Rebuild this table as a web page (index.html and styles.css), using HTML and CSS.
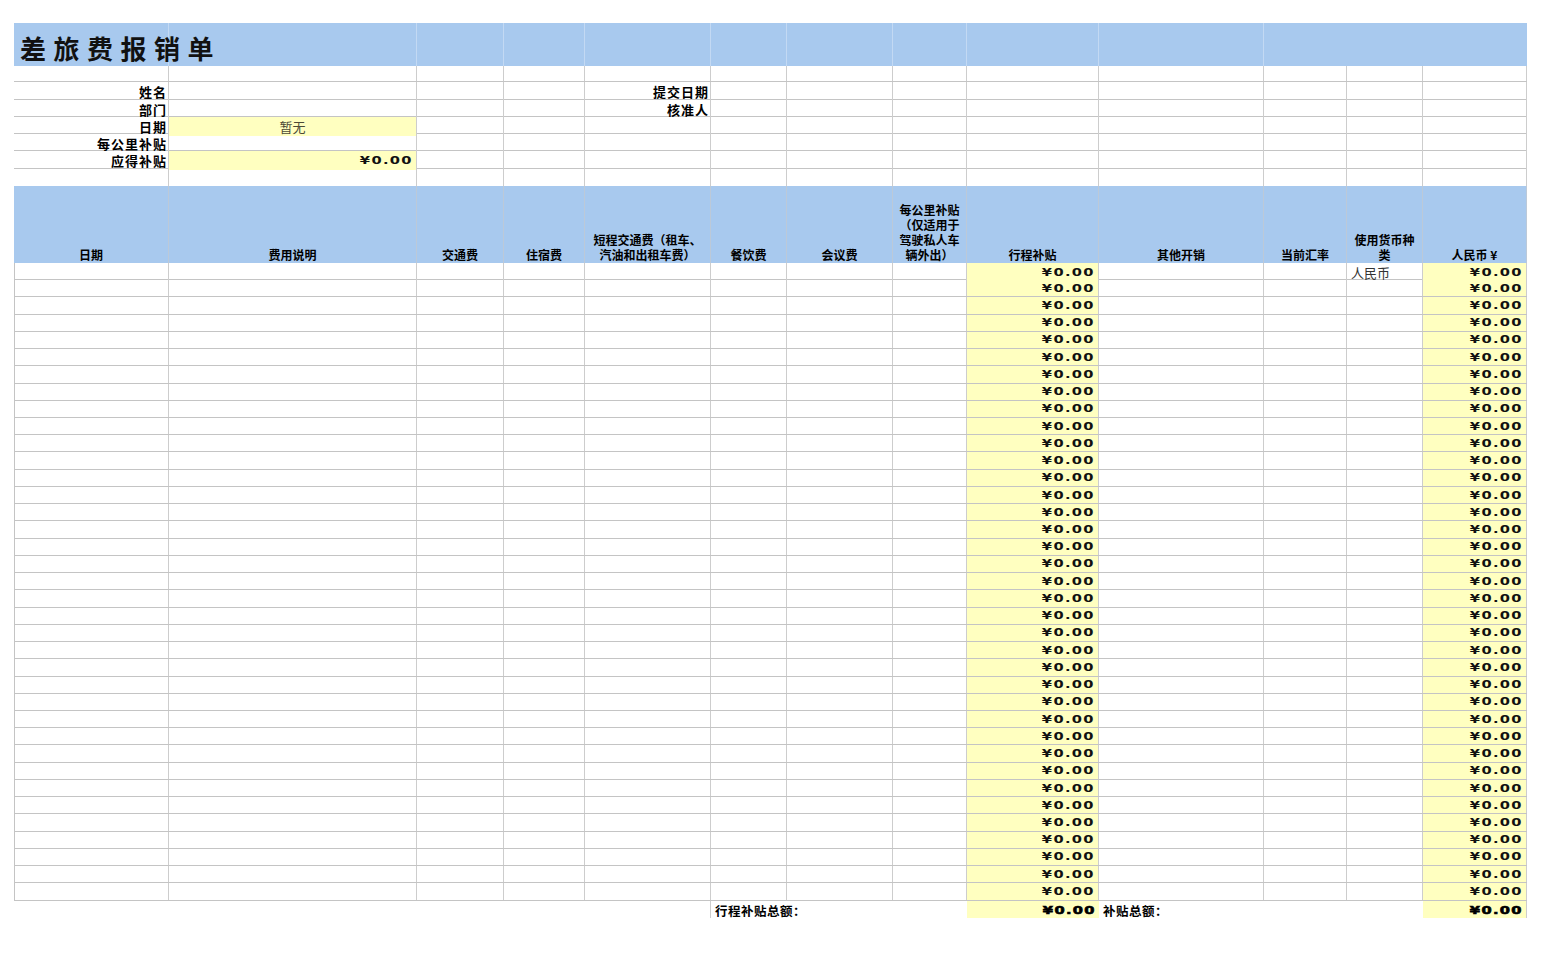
FILE: index.html
```html
<!DOCTYPE html>
<html lang="zh-CN">
<head>
<meta charset="utf-8">
<title>差旅费报销单</title>
<link rel="stylesheet" href="styles.css">
</head>
<body>
<div class="sheet">
  <div class="row title-row">
    <div class="c title">差旅费报销单</div>
    <div class="c"></div><div class="c"></div><div class="c"></div><div class="c"></div><div class="c"></div><div class="c"></div><div class="c"></div><div class="c"></div><div class="c"></div>
    <div class="c span3 last"></div>
  </div>

  <div class="row info first"><div class="c"></div><div class="c"></div><div class="c"></div><div class="c"></div><div class="c"></div><div class="c"></div><div class="c"></div><div class="c"></div><div class="c"></div><div class="c"></div><div class="c"></div><div class="c"></div><div class="c"></div></div>
  <div class="row info"><div class="c lbl">姓名</div><div class="c"></div><div class="c"></div><div class="c"></div><div class="c lbl">提交日期</div><div class="c"></div><div class="c"></div><div class="c"></div><div class="c"></div><div class="c"></div><div class="c"></div><div class="c"></div><div class="c"></div></div>
  <div class="row info"><div class="c lbl">部门</div><div class="c"></div><div class="c"></div><div class="c"></div><div class="c lbl">核准人</div><div class="c"></div><div class="c"></div><div class="c"></div><div class="c"></div><div class="c"></div><div class="c"></div><div class="c"></div><div class="c"></div></div>
  <div class="row info"><div class="c lbl">日期</div><div class="c y val">暂无</div><div class="c"></div><div class="c"></div><div class="c"></div><div class="c"></div><div class="c"></div><div class="c"></div><div class="c"></div><div class="c"></div><div class="c"></div><div class="c"></div><div class="c"></div></div>
  <div class="row info"><div class="c lbl">每公里补贴</div><div class="c"></div><div class="c"></div><div class="c"></div><div class="c"></div><div class="c"></div><div class="c"></div><div class="c"></div><div class="c"></div><div class="c"></div><div class="c"></div><div class="c"></div><div class="c"></div></div>
  <div class="row info"><div class="c lbl">应得补贴</div><div class="c y money"><span>¥0.00</span></div><div class="c"></div><div class="c"></div><div class="c"></div><div class="c"></div><div class="c"></div><div class="c"></div><div class="c"></div><div class="c"></div><div class="c"></div><div class="c"></div><div class="c"></div></div>
  <div class="row info last"><div class="c"></div><div class="c"></div><div class="c"></div><div class="c"></div><div class="c"></div><div class="c"></div><div class="c"></div><div class="c"></div><div class="c"></div><div class="c"></div><div class="c"></div><div class="c"></div><div class="c"></div></div>

  <div class="row head">
    <div class="c">日期</div>
    <div class="c">费用说明</div>
    <div class="c">交通费</div>
    <div class="c">住宿费</div>
    <div class="c">短程交通费（租车、<br>汽油和出租车费）</div>
    <div class="c">餐饮费</div>
    <div class="c">会议费</div>
    <div class="c">每公里补贴<br>（仅适用于<br>驾驶私人车<br>辆外出）</div>
    <div class="c">行程补贴</div>
    <div class="c">其他开销</div>
    <div class="c">当前汇率</div>
    <div class="c">使用货币种<br>类</div>
    <div class="c">人民币 ¥</div>
  </div>

  <div class="row data"><div class="c"></div><div class="c"></div><div class="c"></div><div class="c"></div><div class="c"></div><div class="c"></div><div class="c"></div><div class="c"></div><div class="c y money"><span>¥0.00</span></div><div class="c"></div><div class="c"></div><div class="c cur">人民币</div><div class="c y money"><span>¥0.00</span></div></div>
  <div class="row data"><div class="c"></div><div class="c"></div><div class="c"></div><div class="c"></div><div class="c"></div><div class="c"></div><div class="c"></div><div class="c"></div><div class="c y money"><span>¥0.00</span></div><div class="c"></div><div class="c"></div><div class="c"></div><div class="c y money"><span>¥0.00</span></div></div>
  <div class="row data"><div class="c"></div><div class="c"></div><div class="c"></div><div class="c"></div><div class="c"></div><div class="c"></div><div class="c"></div><div class="c"></div><div class="c y money"><span>¥0.00</span></div><div class="c"></div><div class="c"></div><div class="c"></div><div class="c y money"><span>¥0.00</span></div></div>
  <div class="row data"><div class="c"></div><div class="c"></div><div class="c"></div><div class="c"></div><div class="c"></div><div class="c"></div><div class="c"></div><div class="c"></div><div class="c y money"><span>¥0.00</span></div><div class="c"></div><div class="c"></div><div class="c"></div><div class="c y money"><span>¥0.00</span></div></div>
  <div class="row data"><div class="c"></div><div class="c"></div><div class="c"></div><div class="c"></div><div class="c"></div><div class="c"></div><div class="c"></div><div class="c"></div><div class="c y money"><span>¥0.00</span></div><div class="c"></div><div class="c"></div><div class="c"></div><div class="c y money"><span>¥0.00</span></div></div>
  <div class="row data"><div class="c"></div><div class="c"></div><div class="c"></div><div class="c"></div><div class="c"></div><div class="c"></div><div class="c"></div><div class="c"></div><div class="c y money"><span>¥0.00</span></div><div class="c"></div><div class="c"></div><div class="c"></div><div class="c y money"><span>¥0.00</span></div></div>
  <div class="row data"><div class="c"></div><div class="c"></div><div class="c"></div><div class="c"></div><div class="c"></div><div class="c"></div><div class="c"></div><div class="c"></div><div class="c y money"><span>¥0.00</span></div><div class="c"></div><div class="c"></div><div class="c"></div><div class="c y money"><span>¥0.00</span></div></div>
  <div class="row data"><div class="c"></div><div class="c"></div><div class="c"></div><div class="c"></div><div class="c"></div><div class="c"></div><div class="c"></div><div class="c"></div><div class="c y money"><span>¥0.00</span></div><div class="c"></div><div class="c"></div><div class="c"></div><div class="c y money"><span>¥0.00</span></div></div>
  <div class="row data"><div class="c"></div><div class="c"></div><div class="c"></div><div class="c"></div><div class="c"></div><div class="c"></div><div class="c"></div><div class="c"></div><div class="c y money"><span>¥0.00</span></div><div class="c"></div><div class="c"></div><div class="c"></div><div class="c y money"><span>¥0.00</span></div></div>
  <div class="row data"><div class="c"></div><div class="c"></div><div class="c"></div><div class="c"></div><div class="c"></div><div class="c"></div><div class="c"></div><div class="c"></div><div class="c y money"><span>¥0.00</span></div><div class="c"></div><div class="c"></div><div class="c"></div><div class="c y money"><span>¥0.00</span></div></div>
  <div class="row data"><div class="c"></div><div class="c"></div><div class="c"></div><div class="c"></div><div class="c"></div><div class="c"></div><div class="c"></div><div class="c"></div><div class="c y money"><span>¥0.00</span></div><div class="c"></div><div class="c"></div><div class="c"></div><div class="c y money"><span>¥0.00</span></div></div>
  <div class="row data"><div class="c"></div><div class="c"></div><div class="c"></div><div class="c"></div><div class="c"></div><div class="c"></div><div class="c"></div><div class="c"></div><div class="c y money"><span>¥0.00</span></div><div class="c"></div><div class="c"></div><div class="c"></div><div class="c y money"><span>¥0.00</span></div></div>
  <div class="row data"><div class="c"></div><div class="c"></div><div class="c"></div><div class="c"></div><div class="c"></div><div class="c"></div><div class="c"></div><div class="c"></div><div class="c y money"><span>¥0.00</span></div><div class="c"></div><div class="c"></div><div class="c"></div><div class="c y money"><span>¥0.00</span></div></div>
  <div class="row data"><div class="c"></div><div class="c"></div><div class="c"></div><div class="c"></div><div class="c"></div><div class="c"></div><div class="c"></div><div class="c"></div><div class="c y money"><span>¥0.00</span></div><div class="c"></div><div class="c"></div><div class="c"></div><div class="c y money"><span>¥0.00</span></div></div>
  <div class="row data"><div class="c"></div><div class="c"></div><div class="c"></div><div class="c"></div><div class="c"></div><div class="c"></div><div class="c"></div><div class="c"></div><div class="c y money"><span>¥0.00</span></div><div class="c"></div><div class="c"></div><div class="c"></div><div class="c y money"><span>¥0.00</span></div></div>
  <div class="row data"><div class="c"></div><div class="c"></div><div class="c"></div><div class="c"></div><div class="c"></div><div class="c"></div><div class="c"></div><div class="c"></div><div class="c y money"><span>¥0.00</span></div><div class="c"></div><div class="c"></div><div class="c"></div><div class="c y money"><span>¥0.00</span></div></div>
  <div class="row data"><div class="c"></div><div class="c"></div><div class="c"></div><div class="c"></div><div class="c"></div><div class="c"></div><div class="c"></div><div class="c"></div><div class="c y money"><span>¥0.00</span></div><div class="c"></div><div class="c"></div><div class="c"></div><div class="c y money"><span>¥0.00</span></div></div>
  <div class="row data"><div class="c"></div><div class="c"></div><div class="c"></div><div class="c"></div><div class="c"></div><div class="c"></div><div class="c"></div><div class="c"></div><div class="c y money"><span>¥0.00</span></div><div class="c"></div><div class="c"></div><div class="c"></div><div class="c y money"><span>¥0.00</span></div></div>
  <div class="row data"><div class="c"></div><div class="c"></div><div class="c"></div><div class="c"></div><div class="c"></div><div class="c"></div><div class="c"></div><div class="c"></div><div class="c y money"><span>¥0.00</span></div><div class="c"></div><div class="c"></div><div class="c"></div><div class="c y money"><span>¥0.00</span></div></div>
  <div class="row data"><div class="c"></div><div class="c"></div><div class="c"></div><div class="c"></div><div class="c"></div><div class="c"></div><div class="c"></div><div class="c"></div><div class="c y money"><span>¥0.00</span></div><div class="c"></div><div class="c"></div><div class="c"></div><div class="c y money"><span>¥0.00</span></div></div>
  <div class="row data"><div class="c"></div><div class="c"></div><div class="c"></div><div class="c"></div><div class="c"></div><div class="c"></div><div class="c"></div><div class="c"></div><div class="c y money"><span>¥0.00</span></div><div class="c"></div><div class="c"></div><div class="c"></div><div class="c y money"><span>¥0.00</span></div></div>
  <div class="row data"><div class="c"></div><div class="c"></div><div class="c"></div><div class="c"></div><div class="c"></div><div class="c"></div><div class="c"></div><div class="c"></div><div class="c y money"><span>¥0.00</span></div><div class="c"></div><div class="c"></div><div class="c"></div><div class="c y money"><span>¥0.00</span></div></div>
  <div class="row data"><div class="c"></div><div class="c"></div><div class="c"></div><div class="c"></div><div class="c"></div><div class="c"></div><div class="c"></div><div class="c"></div><div class="c y money"><span>¥0.00</span></div><div class="c"></div><div class="c"></div><div class="c"></div><div class="c y money"><span>¥0.00</span></div></div>
  <div class="row data"><div class="c"></div><div class="c"></div><div class="c"></div><div class="c"></div><div class="c"></div><div class="c"></div><div class="c"></div><div class="c"></div><div class="c y money"><span>¥0.00</span></div><div class="c"></div><div class="c"></div><div class="c"></div><div class="c y money"><span>¥0.00</span></div></div>
  <div class="row data"><div class="c"></div><div class="c"></div><div class="c"></div><div class="c"></div><div class="c"></div><div class="c"></div><div class="c"></div><div class="c"></div><div class="c y money"><span>¥0.00</span></div><div class="c"></div><div class="c"></div><div class="c"></div><div class="c y money"><span>¥0.00</span></div></div>
  <div class="row data"><div class="c"></div><div class="c"></div><div class="c"></div><div class="c"></div><div class="c"></div><div class="c"></div><div class="c"></div><div class="c"></div><div class="c y money"><span>¥0.00</span></div><div class="c"></div><div class="c"></div><div class="c"></div><div class="c y money"><span>¥0.00</span></div></div>
  <div class="row data"><div class="c"></div><div class="c"></div><div class="c"></div><div class="c"></div><div class="c"></div><div class="c"></div><div class="c"></div><div class="c"></div><div class="c y money"><span>¥0.00</span></div><div class="c"></div><div class="c"></div><div class="c"></div><div class="c y money"><span>¥0.00</span></div></div>
  <div class="row data"><div class="c"></div><div class="c"></div><div class="c"></div><div class="c"></div><div class="c"></div><div class="c"></div><div class="c"></div><div class="c"></div><div class="c y money"><span>¥0.00</span></div><div class="c"></div><div class="c"></div><div class="c"></div><div class="c y money"><span>¥0.00</span></div></div>
  <div class="row data"><div class="c"></div><div class="c"></div><div class="c"></div><div class="c"></div><div class="c"></div><div class="c"></div><div class="c"></div><div class="c"></div><div class="c y money"><span>¥0.00</span></div><div class="c"></div><div class="c"></div><div class="c"></div><div class="c y money"><span>¥0.00</span></div></div>
  <div class="row data"><div class="c"></div><div class="c"></div><div class="c"></div><div class="c"></div><div class="c"></div><div class="c"></div><div class="c"></div><div class="c"></div><div class="c y money"><span>¥0.00</span></div><div class="c"></div><div class="c"></div><div class="c"></div><div class="c y money"><span>¥0.00</span></div></div>
  <div class="row data"><div class="c"></div><div class="c"></div><div class="c"></div><div class="c"></div><div class="c"></div><div class="c"></div><div class="c"></div><div class="c"></div><div class="c y money"><span>¥0.00</span></div><div class="c"></div><div class="c"></div><div class="c"></div><div class="c y money"><span>¥0.00</span></div></div>
  <div class="row data"><div class="c"></div><div class="c"></div><div class="c"></div><div class="c"></div><div class="c"></div><div class="c"></div><div class="c"></div><div class="c"></div><div class="c y money"><span>¥0.00</span></div><div class="c"></div><div class="c"></div><div class="c"></div><div class="c y money"><span>¥0.00</span></div></div>
  <div class="row data"><div class="c"></div><div class="c"></div><div class="c"></div><div class="c"></div><div class="c"></div><div class="c"></div><div class="c"></div><div class="c"></div><div class="c y money"><span>¥0.00</span></div><div class="c"></div><div class="c"></div><div class="c"></div><div class="c y money"><span>¥0.00</span></div></div>
  <div class="row data"><div class="c"></div><div class="c"></div><div class="c"></div><div class="c"></div><div class="c"></div><div class="c"></div><div class="c"></div><div class="c"></div><div class="c y money"><span>¥0.00</span></div><div class="c"></div><div class="c"></div><div class="c"></div><div class="c y money"><span>¥0.00</span></div></div>
  <div class="row data"><div class="c"></div><div class="c"></div><div class="c"></div><div class="c"></div><div class="c"></div><div class="c"></div><div class="c"></div><div class="c"></div><div class="c y money"><span>¥0.00</span></div><div class="c"></div><div class="c"></div><div class="c"></div><div class="c y money"><span>¥0.00</span></div></div>
  <div class="row data"><div class="c"></div><div class="c"></div><div class="c"></div><div class="c"></div><div class="c"></div><div class="c"></div><div class="c"></div><div class="c"></div><div class="c y money"><span>¥0.00</span></div><div class="c"></div><div class="c"></div><div class="c"></div><div class="c y money"><span>¥0.00</span></div></div>
  <div class="row data"><div class="c"></div><div class="c"></div><div class="c"></div><div class="c"></div><div class="c"></div><div class="c"></div><div class="c"></div><div class="c"></div><div class="c y money"><span>¥0.00</span></div><div class="c"></div><div class="c"></div><div class="c"></div><div class="c y money"><span>¥0.00</span></div></div>

  <div class="row total">
    <div class="c gap"></div>
    <div class="c tl span3">行程补贴总额：</div>
    <div class="c y money strong"><span>¥0.00</span></div>
    <div class="c tl span3">补贴总额：</div>
    <div class="c y money strong end"><span>¥0.00</span></div>
  </div>
</div>
</body>
</html>
```

FILE: styles.css
```css
* {
  box-sizing: border-box;
}

body {
  margin: 0;
  padding: 23px 0 0 14px;
  background: #ffffff;
  font-family: "Noto Sans CJK SC", "Liberation Sans", sans-serif;
  font-size: 12px;
  color: #000000;
}

.sheet {
  width: 1513px;
}

.row {
  display: grid;
  grid-template-columns: 155px 248px 87px 81px 126px 76px 106px 74px 132px 165px 83px 76px 104px;
}

.c {
  min-width: 0;
  display: flex;
  align-items: center;
  white-space: nowrap;
  border-right: 1px solid #cdcdcd;
}

.span3 {
  grid-column: span 3;
}

/* title band */
.title-row {
  height: 43px;
  background: #a8c9ee;
}

.title-row .c {
  border-right-color: #c3d9f3;
}

.title-row .c.last {
  border-right: none;
}

.title {
  overflow: visible;
  padding: 5px 0 0 6px;
  font-size: 26px;
  font-weight: 600;
  letter-spacing: 7.5px;
  color: #111111;
}

/* info rows */
.info {
  height: 17.28px;
  border-bottom: 1px solid #c4c4c4;
}

.info.first {
  height: 16.3px;
}

.info.last {
  border-bottom: none;
}

.lbl {
  justify-content: flex-end;
  font-weight: 700;
  font-size: 13px;
  letter-spacing: 1px;
  padding-right: 1px;
}

.val {
  justify-content: center;
  font-size: 13px;
  color: #4c4a36;
}

.y {
  background: #ffffc0;
}

.money {
  justify-content: flex-end;
  padding-right: 3px;
}

.money span {
  display: inline-block;
  font-family: "DejaVu Sans", sans-serif;
  font-weight: 700;
  font-size: 11px;
  letter-spacing: 1px;
  transform: scaleX(1.33);
  transform-origin: right center;
  color: #111111;
}

.money.strong span {
  -webkit-text-stroke: 0.6px #000000;
  color: #000000;
}

/* header band */
.head {
  height: 77px;
  background: #a8c9ee;
}

.head .c {
  align-items: flex-end;
  justify-content: center;
  text-align: center;
  white-space: normal;
  font-weight: 700;
  line-height: 15px;
  padding-bottom: 1px;
  border-right-color: #bcc9d8;
}

/* data rows */
.data {
  height: 17.243px;
  border-bottom: 1px solid #c4c4c4;
}

.data .c:first-child {
  border-left: 1px solid #c4c4c4;
}

.cur {
  padding-left: 4px;
  font-size: 13px;
  color: #333333;
}

/* total row */
.total {
  height: 17px;
}

.total .c {
  border-right: none;
  border-bottom: 1px solid #bdbdbd;
}

.total .c.gap {
  grid-column: span 5;
  border-right: 1px solid #cdcdcd;
  border-bottom: none;
}

.total .c.end {
  border-right: 1px solid #cdcdcd;
}

.tl {
  padding-left: 4px;
  font-size: 12.5px;
  font-weight: 700;
  letter-spacing: 0.5px;
}
```
